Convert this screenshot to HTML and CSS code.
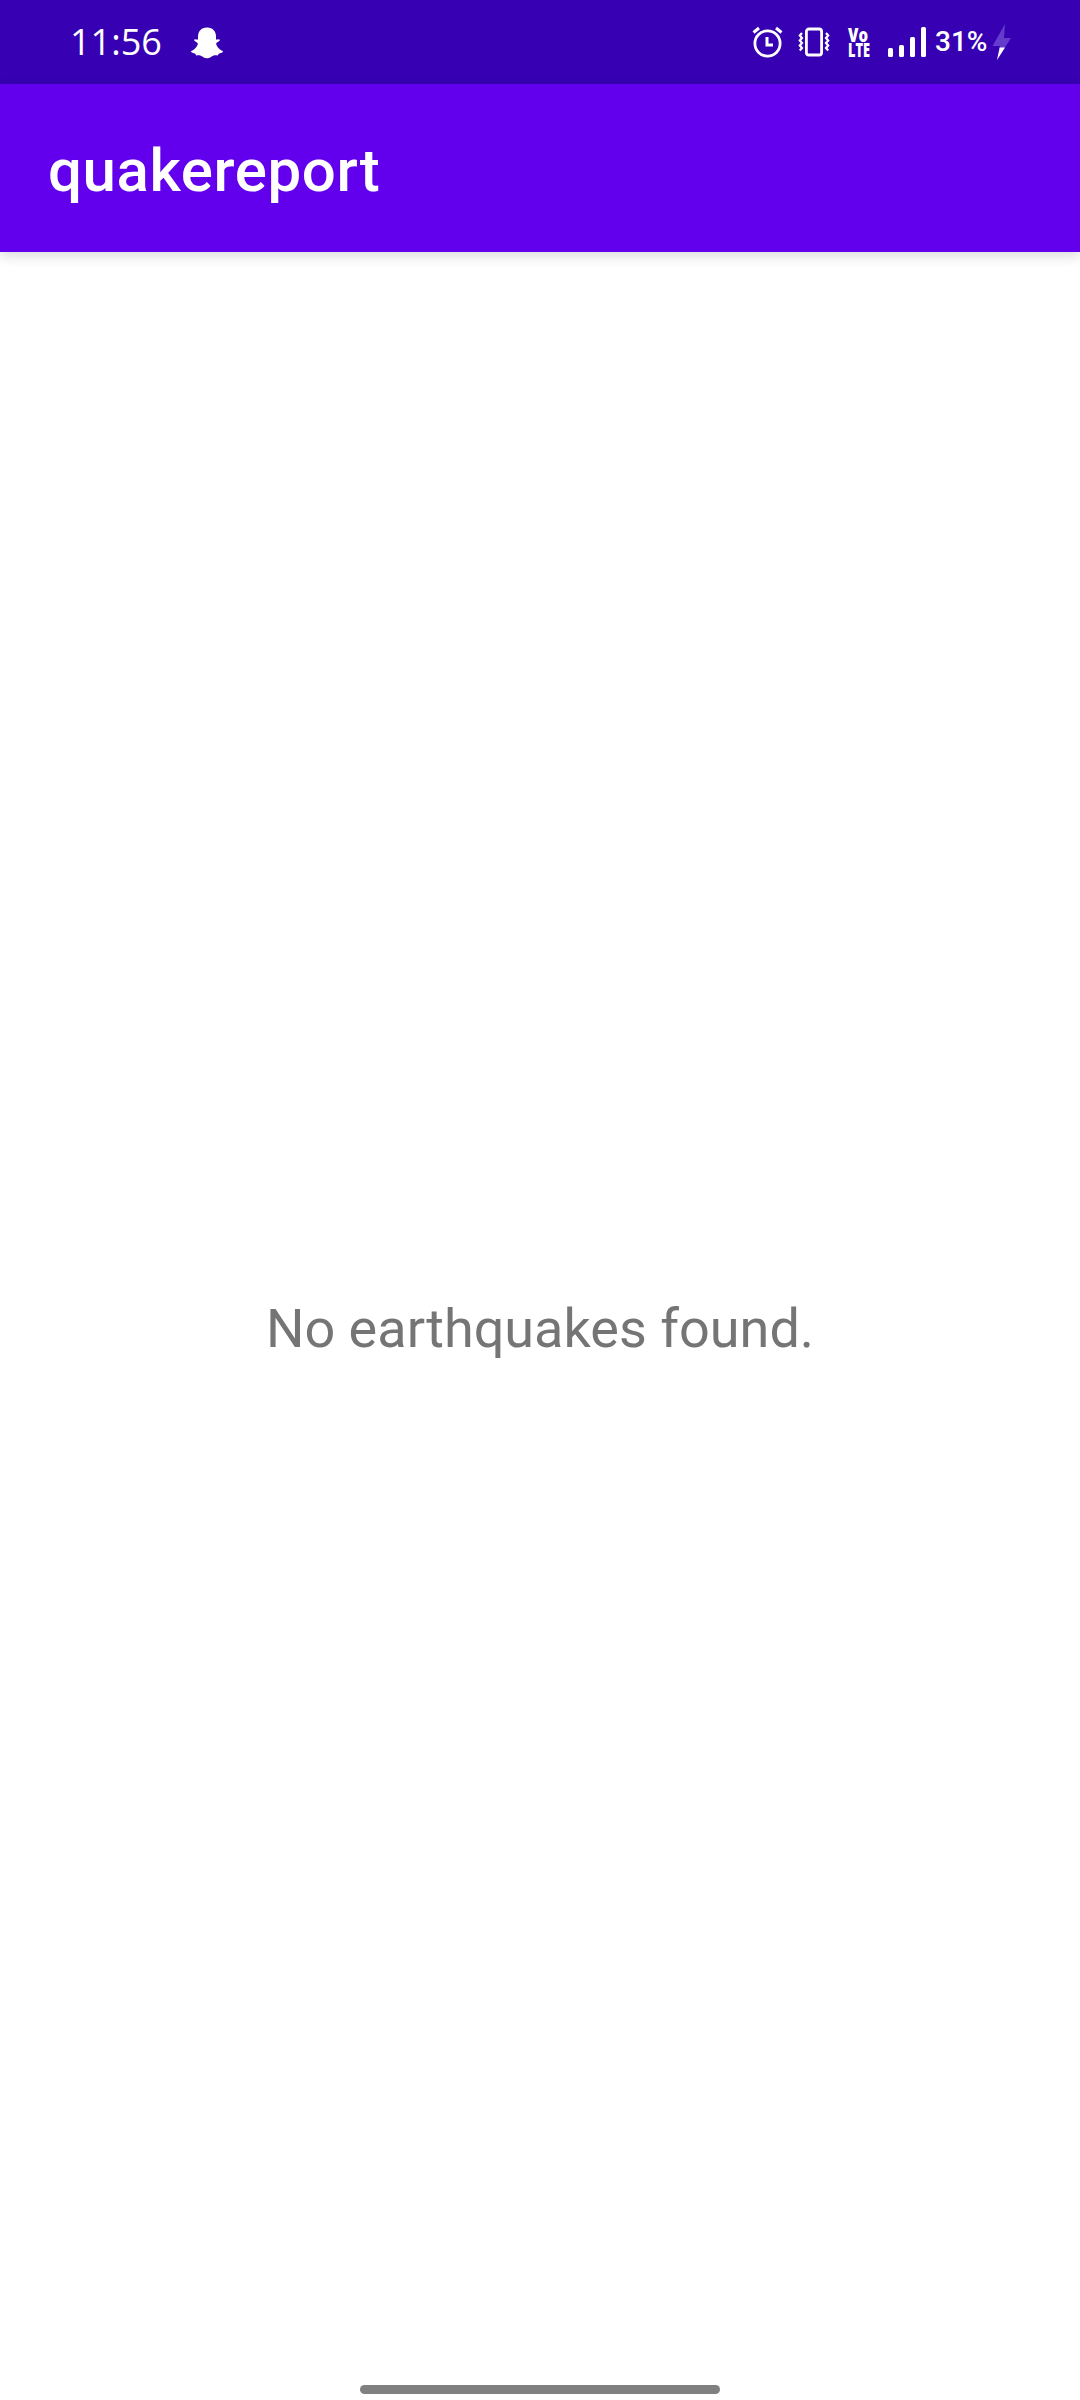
FILE: index.html
```html
<!DOCTYPE html>
<html lang="en">
<head>
<meta charset="utf-8">
<title>quakereport</title>
<link rel="stylesheet" href="styles.css">
</head>
<body>
<div class="status-bar">
  <span class="time">11:56</span>
  <svg class="ghost" width="34" height="32" viewBox="0 0 34 32"><path fill="#fff" d="M17 .5C11 .5 8 4.500 8 9.500V12.500C6.500 13 4.500 11.500 4.200 13 4 14.500 7.500 15 7.800 16.500 8 18.500 4.500 23 1.200 24 .5 25 2 26 5.300 26.700L6.200 28.500C9 27.800 11 28.300 13 30 15.500 31.800 18.500 31.800 21 30 23 28.300 25 27.800 27.800 28.500L28.700 26.700C32 26 33.500 25 32.800 24 29.500 23 26 18.500 26.200 16.500 26.500 15 30 14.500 29.800 13 29.500 11.500 27.500 13 26 12.500V9.500C26 4.500 23 .5 17 .5Z"/></svg>
  <div class="indicators">
    <svg class="alarm" width="32" height="32" viewBox="0 0 32 32" fill="none" stroke="#fff"><circle cx="15.500" cy="17.500" r="12.600" stroke-width="2.800"/><path stroke-width="3" d="M1.500 6.500 7 2M24 2l5.500 4.500M15 11v8h6"/></svg>
    <svg class="vibrate" width="32" height="30" viewBox="0 0 32 30" fill="none" stroke="#fff"><rect x="8.400" y="2" width="15.200" height="26" rx="2.600" stroke-width="2.800"/><path stroke-width="2.200" d="M4 6 1.800 8.500 4 11 1.800 13.500 4 16 1.800 18.500 4 21 1.800 23.500M28 6 30.200 8.500 28 11 30.200 13.500 28 16 30.200 18.500 28 21 30.200 23.500"/></svg>
    <svg class="volte" width="24" height="32" viewBox="0 0 24 32" fill="#fff"><text x="1" y="14.500" font-size="18.500" textLength="20" lengthAdjust="spacingAndGlyphs">Vo</text><text x="1" y="30" font-size="18.500" textLength="22" lengthAdjust="spacingAndGlyphs">LTE</text></svg>
    <svg class="signal" width="38" height="30" viewBox="0 0 38 30" fill="#fff"><rect y="21" width="5" height="9" rx="1.500"/><rect x="11" y="18" width="5" height="12" rx="1.500"/><rect x="22" y="10" width="5" height="20" rx="1.500"/><rect x="33" width="5" height="30" rx="1.500"/></svg>
    <span class="percent">31%</span>
    <svg class="bolt" width="20" height="36" viewBox="0 0 20 36"><path fill="#643bcc" d="M13 0 .5 22H8L5 36 19 14H12Z"/><path fill="#fff" d="M7.700 23.500H13L5 36Z"/></svg>
  </div>
</div>
<header class="app-bar"><h1 class="title">quakereport</h1></header>
<main class="content"><p class="empty">No earthquakes found.</p></main>
<footer class="nav"><div class="handle"></div></footer>
</body>
</html>
```
FILE: styles.css
```css
* { box-sizing: border-box; }
body {
  margin: 0;
  height: 2400px;
  display: flex;
  flex-direction: column;
  background: #fff;
  font-family: Roboto, sans-serif;
}
svg { display: block; flex: none; }
.status-bar {
  height: 84px;
  flex: none;
  display: flex;
  align-items: flex-start;
  padding: 0 68px 0 70px;
  background: #3700b3;
  color: #fff;
}
.time {
  width: 120px;
  padding-top: 20px;
  font: 400 36px/44px "Open Sans", sans-serif;
}
.ghost { margin-top: 27px; }
.indicators {
  margin-left: auto;
  display: flex;
  align-items: flex-start;
}
.alarm { margin-top: 26px; }
.vibrate { margin: 27px 0 0 14px; }
.volte {
  margin: 27px 0 0 17px;
  overflow: visible;
  font-family: "Open Sans", sans-serif;
  font-weight: 800;
}
.signal { margin: 27px 0 0 17px; }
.percent {
  width: 51px;
  margin: 25px 0 0 9px;
  font: 500 28px/34px Roboto, sans-serif;
  white-space: nowrap;
}
.bolt { margin: 24px 0 0 6px; }
.app-bar {
  height: 168px;
  flex: none;
  display: flex;
  align-items: center;
  padding: 5px 48px 0;
  background: #6200ee;
  color: #fff;
  box-shadow: 0 4px 12px rgba(0, 0, 0, .14);
}
.title {
  margin: 0;
  font-size: 60px;
  font-weight: 500;
  line-height: 70px;
  letter-spacing: .6px;
}
.content {
  flex: 1;
  display: flex;
  align-items: center;
  justify-content: center;
  padding-top: 20px;
}
.empty {
  margin: 0;
  color: #757575;
  font-size: 54px;
  line-height: 64px;
}
.nav {
  height: 15px;
  flex: none;
  display: flex;
  justify-content: center;
}
.handle {
  width: 360px;
  height: 9px;
  border-radius: 5px;
  background: #808080;
}
```
